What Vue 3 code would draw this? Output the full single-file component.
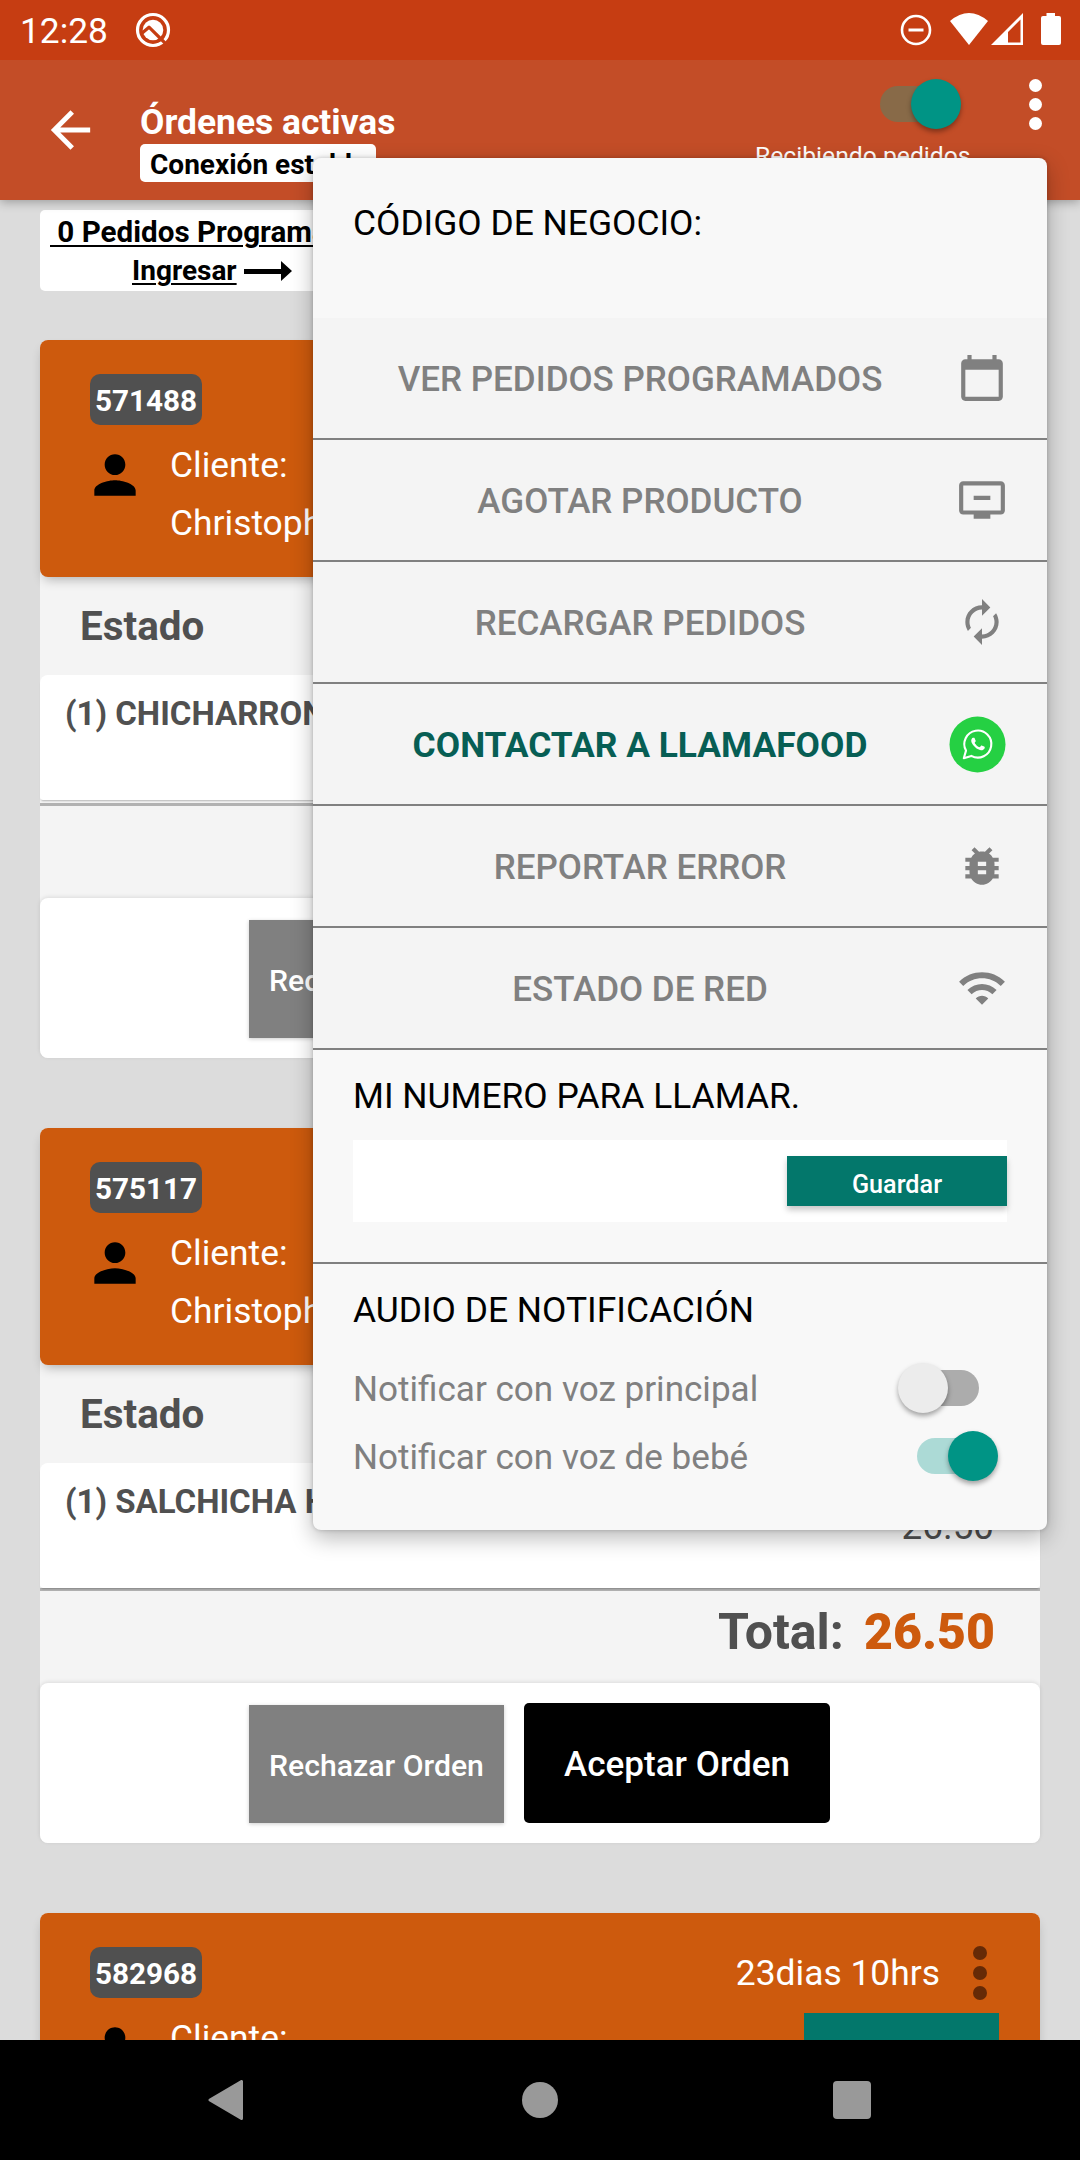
<template>
  <div class="screen">
    <div class="status-bar">
      <span class="clock">12:28</span>
      <svg class="status-app" width="38" height="38" viewBox="0 0 38 38">
        <circle cx="19" cy="19" r="15.5" fill="none" stroke="#fff" stroke-width="3.2" />
        <circle cx="19" cy="19" r="10.3" fill="#fff" />
        <path d="M7 23 L15 16.2 L31 32" fill="none" stroke="#c63d12" stroke-width="3.2" stroke-linejoin="round" />
      </svg>
      <div class="status-icons">
        <svg width="34" height="34" viewBox="0 0 34 34">
          <circle cx="17" cy="17" r="14" fill="none" stroke="#fff" stroke-width="2.6" />
          <path d="M9.5 17 H24.5" stroke="#fff" stroke-width="3" />
        </svg>
        <svg class="wifi" width="38" height="32" viewBox="0 0 38 32">
          <path d="M0 8 Q19 -8 38 8 L19 32 Z" fill="#fff" />
        </svg>
        <svg class="signal" width="32" height="32" viewBox="0 0 32 32">
          <path d="M0 32 L32 0 V32 Z M17 29.5 H29.5 V6.5 L17 19 Z" fill="#fff" fill-rule="evenodd" />
        </svg>
        <svg class="battery" width="20" height="32" viewBox="0 0 20 32">
          <path d="M5.5 0 H14 V3 H18 Q20 3 20 5 V30 Q20 32 18 32 H2 Q0 32 0 30 V5 Q0 3 2 3 H5.5 Z" fill="#fff" />
        </svg>
      </div>
    </div>

    <header class="app-bar">
      <svg class="back" width="59" height="60" viewBox="0 0 24 24">
        <path d="M20 11H7.83l5.59-5.59L12 4l-8 8 8 8 1.41-1.41L7.83 13H20v-2z" fill="#fff" />
      </svg>
      <div class="titles">
        <h1>Órdenes activas</h1>
        <span class="connection">Conexión estable</span>
      </div>
      <div class="receiving">
        <span class="switch on bar"><i></i></span>
        <span class="receiving-text">Recibiendo pedidos</span>
      </div>
      <div class="dots"><i></i><i></i><i></i></div>
    </header>

    <main class="content">
      <div class="scheduled">
        <div class="scheduled-title">&nbsp;0 Pedidos Programados</div>
        <div class="scheduled-link">
          <span>Ingresar</span>
          <svg width="48" height="20" viewBox="0 0 48 20">
            <path d="M0 8 H37 V0 L48 10 L37 20 V13 H0 Z" />
          </svg>
        </div>
      </div>

      <article v-for="order in orders" :key="order.id" class="order">
        <div class="order-head">
          <div class="order-top">
            <span class="order-id">{{ order.id }}</span>
            <template v-if="order.time">
              <span class="order-time">{{ order.time }}</span>
              <div class="dots dark"><i></i><i></i><i></i></div>
            </template>
          </div>
          <div class="client">
            <svg width="62" height="62" viewBox="0 0 24 24">
              <path d="M12 12c2.21 0 4-1.79 4-4s-1.79-4-4-4-4 1.79-4 4 1.79 4 4 4zm0 2c-2.67 0-8 1.34-8 4v2h16v-2c0-2.66-5.33-4-8-4z" />
            </svg>
            <div class="client-name">
              <div>Cliente:</div>
              <div>{{ order.client }}</div>
            </div>
            <div class="client-action"></div>
          </div>
        </div>
        <template v-if="order.item">
          <div class="order-state">Estado</div>
          <div class="order-items">
            <span class="item-name">{{ order.item }}</span>
            <span class="item-price">{{ order.total }}</span>
          </div>
          <div class="order-total" :class="{ spaced: order.spaced }">
            <template v-if="order.total">
              <span>Total:</span>
              <b>{{ order.total }}</b>
            </template>
          </div>
          <div class="order-actions">
            <button class="reject">Rechazar Orden</button>
            <button v-if="order.total" class="accept">Aceptar Orden</button>
            <div v-else class="accept"></div>
          </div>
        </template>
      </article>
    </main>

    <nav class="nav-bar">
      <svg width="36" height="40" viewBox="0 0 36 40">
        <path d="M33.5 1.5 V38.5 L2 20 Z" fill="#999" stroke="#999" stroke-width="3" stroke-linejoin="round" />
      </svg>
      <span class="nav-home"></span>
      <span class="nav-recent"></span>
    </nav>

    <section class="menu">
      <h2 class="code">CÓDIGO DE NEGOCIO:</h2>
      <button v-for="entry in entries" :key="entry.label" class="menu-row" :class="{ contact: entry.contact }">
        <span>{{ entry.label }}</span>
        <svg v-if="entry.contact" width="57" height="57" viewBox="0 0 57 57">
          <circle cx="28.5" cy="28.5" r="28" fill="#25d043" />
          <path d="M14.8 42.2 L17 34.6 A13.5 13.5 0 1 1 22.3 39.9 Z" fill="none" stroke="#fff" stroke-width="2.1" stroke-linejoin="round" />
          <path transform="translate(15.5 14.5) scale(1.12)" fill="#fff" d="M17.472 14.382c-.297-.149-1.758-.867-2.03-.967-.273-.099-.471-.148-.67.15-.197.297-.767.966-.94 1.164-.173.199-.347.223-.644.075-.297-.15-1.255-.463-2.39-1.475-.883-.788-1.48-1.761-1.653-2.059-.173-.297-.018-.458.13-.606.134-.133.298-.347.446-.52.149-.174.198-.298.298-.497.099-.198.05-.371-.025-.52-.075-.149-.669-1.612-.916-2.207-.242-.579-.487-.5-.669-.51-.173-.008-.371-.01-.57-.01-.198 0-.52.074-.792.372-.272.297-1.04 1.016-1.04 2.479 0 1.462 1.065 2.875 1.213 3.074.149.198 2.096 3.2 5.077 4.487.709.306 1.262.489 1.694.625.712.227 1.36.195 1.871.118.571-.085 1.758-.719 2.006-1.413.248-.694.248-1.289.173-1.413-.074-.124-.272-.198-.57-.347z" />
        </svg>
        <svg v-else width="50" height="50" viewBox="0 0 24 24">
          <path :d="entry.icon" fill="#808080" />
        </svg>
      </button>

      <div class="phone">
        <h2>MI NUMERO PARA LLAMAR.</h2>
        <div class="phone-field">
          <input v-model="phone" />
          <button>Guardar</button>
        </div>
      </div>

      <div class="audio">
        <h2>AUDIO DE NOTIFICACIÓN</h2>
        <div class="audio-row">
          <span>Notificar con voz principal</span>
          <span class="switch off"><i></i></span>
        </div>
        <div class="audio-row">
          <span>Notificar con voz de bebé</span>
          <span class="switch on"><i></i></span>
        </div>
      </div>
    </section>
  </div>
</template>

<script setup>
import { ref } from "vue";

const phone = ref("");

const orders = [
  { id: "571488", client: "Christopher", item: "(1) CHICHARRON", spaced: true },
  { id: "575117", client: "Christopher", item: "(1) SALCHICHA H", total: "26.50" },
  { id: "582968", time: "23dias 10hrs" },
];

const entries = [
  {
    label: "VER PEDIDOS PROGRAMADOS",
    icon: "M20 3h-1V1h-2v2H7V1H5v2H4c-1.1 0-2 .9-2 2v16c0 1.1.9 2 2 2h16c1.1 0 2-.9 2-2V5c0-1.1-.9-2-2-2zm0 18H4V8h16v13z",
  },
  {
    label: "AGOTAR PRODUCTO",
    icon: "M21 3H3c-1.11 0-2 .89-2 2v12c0 1.1.89 2 2 2h5v2h8v-2h5c1.1 0 1.99-.9 1.99-2L23 5c0-1.11-.9-2-2-2zm0 14H3V5h18v12zm-5-7v2H8v-2h8z",
  },
  {
    label: "RECARGAR PEDIDOS",
    icon: "M12 6v3l4-4-4-4v3c-4.42 0-8 3.58-8 8 0 1.57.46 3.03 1.24 4.26L6.7 14.8c-.45-.83-.7-1.79-.7-2.8 0-3.31 2.69-6 6-6zm6.76 1.74L17.3 9.2c.44.84.7 1.79.7 2.8 0 3.31-2.69 6-6 6v-3l-4 4 4 4v-3c4.42 0 8-3.58 8-8 0-1.57-.46-3.03-1.24-4.26z",
  },
  { label: "CONTACTAR A LLAMAFOOD", contact: true },
  {
    label: "REPORTAR ERROR",
    icon: "M20 8h-2.81c-.45-.78-1.07-1.45-1.82-1.96L17 4.41 15.59 3l-2.17 2.17C12.96 5.06 12.49 5 12 5c-.49 0-.96.06-1.41.17L8.41 3 7 4.41l1.62 1.63C7.88 6.55 7.26 7.22 6.81 8H4v2h2.09c-.05.33-.09.66-.09 1v1H4v2h2v1c0 .34.04.67.09 1H4v2h2.81c1.04 1.79 2.97 3 5.19 3s4.15-1.21 5.19-3H20v-2h-2.09c.05-.33.09-.66.09-1v-1h2v-2h-2v-1c0-.34-.04-.67-.09-1H20V8zm-6 8h-4v-2h4v2zm0-4h-4v-2h4v2z",
  },
  {
    label: "ESTADO DE RED",
    icon: "M1 9l2 2c4.97-4.97 13.03-4.97 18 0l2-2C16.93 2.93 7.08 2.93 1 9zm8 8l3 3 3-3c-1.65-1.66-4.34-1.66-6 0zm-4-4l2 2c2.76-2.76 7.24-2.76 10 0l2-2C15.14 9.14 8.87 9.14 5 13z",
  },
];
</script>

<style>
body {
  margin: 0;
}
</style>

<style scoped>
.screen {
  position: relative;
  width: 1080px;
  height: 2160px;
  display: flex;
  flex-direction: column;
  overflow: hidden;
  background: #dcdcdc;
  font-family: Roboto, "Liberation Sans", sans-serif;
  color: #000;
}

.screen * {
  box-sizing: border-box;
}

h1,
h2 {
  margin: 0;
}

button {
  border: none;
  padding: 0;
  font-family: inherit;
}

svg {
  display: block;
  flex: none;
}

/* status bar */
.status-bar {
  flex: none;
  height: 60px;
  background: #c63d12;
  color: #fff;
  display: flex;
  align-items: flex-start;
  padding: 0 19px 0 20px;
}

.clock {
  font-size: 35.3px;
  line-height: 63px;
  width: 114px;
}

.status-app {
  margin-top: 11px;
}

.status-icons {
  margin-left: auto;
  padding-top: 13px;
  display: flex;
}

.wifi {
  margin-left: 17px;
}

.signal {
  margin-left: 3px;
}

.battery {
  margin-left: 18px;
}

/* app bar */
.app-bar {
  position: relative;
  flex: none;
  height: 140px;
  background: #c34d27;
  color: #fff;
  display: flex;
  align-items: flex-start;
  padding-left: 41px;
  box-shadow: 0 2px 10px rgba(0, 0, 0, 0.3);
  clip-path: inset(0 0 -20px 0);
}

.back {
  margin-top: 40px;
}

.titles {
  margin: 41px 0 0 40px;
  display: flex;
  flex-direction: column;
  align-items: flex-start;
}

.titles h1 {
  font-size: 35.4px;
  line-height: 42px;
  font-weight: 700;
}

.connection {
  margin-top: 1px;
  width: 236px;
  height: 38px;
  padding-left: 10px;
  border-radius: 5px;
  background: #fff;
  color: #000;
  font-size: 28px;
  line-height: 42px;
  font-weight: 700;
  white-space: nowrap;
}

.receiving {
  margin: 19px 0 0 auto;
  width: 214px;
  display: flex;
  flex-direction: column;
}

.receiving-text {
  margin-top: 12px;
  font-size: 24.7px;
  line-height: 30px;
  white-space: nowrap;
}

.dots {
  width: 14px;
  display: flex;
  flex-direction: column;
  align-items: center;
  gap: 6px;
}

.dots i {
  width: 13px;
  height: 13px;
  border-radius: 50%;
  background: #fff;
}

.app-bar > .dots {
  margin: 19px 38px 0 59px;
}

/* switches */
.switch {
  position: relative;
  display: block;
  width: 72px;
  height: 50px;
}

.switch::before {
  content: "";
  position: absolute;
  left: 0;
  right: 0;
  top: 7px;
  height: 36px;
  border-radius: 18px;
  background: #acacac;
}

.switch i {
  position: absolute;
  top: 0;
  left: -9px;
  width: 50px;
  height: 50px;
  border-radius: 50%;
  background: #ececec;
  box-shadow: 0 3px 5px rgba(0, 0, 0, 0.35);
}

.switch.on::before {
  background: #acdad6;
}

.switch.on i {
  left: 31px;
  background: #009485;
}

.switch.bar {
  margin-left: 125px;
}

.switch.bar::before {
  background: #886a48;
}

/* orders */
.content {
  flex: 1;
  min-height: 0;
  overflow: hidden;
  padding: 10px 40px 0;
}

.scheduled {
  width: 330px;
  height: 81px;
  margin-bottom: 49px;
  padding: 1px 10px 0;
  border-radius: 5px;
  background: #fff;
  font-size: 28px;
  font-weight: 700;
}

.scheduled-title {
  font-size: 29.6px;
  line-height: 42px;
  white-space: nowrap;
  text-decoration: underline;
  text-decoration-thickness: 2px;
  text-underline-offset: 3px;
}

.scheduled-link {
  display: flex;
  align-items: center;
  gap: 7px;
  margin: -2px 0 0 82px;
  line-height: 40px;
}

.scheduled-link span {
  text-decoration: underline;
  text-decoration-thickness: 2px;
  text-underline-offset: 3px;
}

.order {
  width: 1000px;
  margin-bottom: 70px;
  background: #f4f4f4;
  border-radius: 8px;
}

.order-head {
  position: relative;
  height: 237px;
  padding: 34px 50px 0;
  border-radius: 8px;
  background: #cd5a0d;
  color: #fff;
  box-shadow: 0 6px 12px -4px rgba(0, 0, 0, 0.3);
}

.order-top {
  display: flex;
  align-items: center;
  height: 51px;
}

.order-id {
  width: 112px;
  border-radius: 10px;
  background: #505050;
  font-size: 29.7px;
  line-height: 54px;
  height: 51px;
  font-weight: 700;
  text-align: center;
}

.order-time {
  margin-left: auto;
  font-size: 35.4px;
  line-height: 51px;
  padding-top: 2px;
}

.dots.dark {
  margin: 0 3px 0 33px;
}

.dots.dark i {
  width: 14px;
  height: 14px;
  background: #662a06;
}

.client {
  display: flex;
  align-items: flex-start;
}

.client svg {
  margin: 19px 0 0 -6px;
}

.client-name {
  margin: 11px 0 0 24px;
  font-size: 35.4px;
  line-height: 58px;
}

.client-action {
  margin: 15px -9px 0 auto;
  width: 195px;
  height: 60px;
  background: #03776b;
}

.order-state {
  height: 98px;
  padding-left: 40px;
  border-radius: 8px;
  font-size: 40.4px;
  line-height: 100px;
  font-weight: 700;
  color: #505050;
}

.order-items {
  position: relative;
  height: 125px;
  padding: 17px 46px 0 25px;
  display: flex;
  justify-content: space-between;
  align-items: flex-start;
  border-radius: 8px 8px 3px 3px;
  background: #fff;
  color: #505050;
  box-shadow: 0 2px 2px -1px rgba(0, 0, 0, 0.25);
}

.item-name {
  font-size: 33px;
  line-height: 44px;
  font-weight: 700;
}

.item-price {
  margin-top: 25px;
  font-size: 36.8px;
  line-height: 44px;
}

.order-total {
  height: 95px;
  padding-right: 45px;
  border-top: 3px solid #b2b2b2;
  display: flex;
  justify-content: flex-end;
  gap: 20px;
  font-size: 50px;
  line-height: 82px;
  font-weight: 700;
  color: #505050;
}

.order-total b {
  color: #cd5a0d;
}

.order-total.spaced {
  margin-top: 3px;
}

.order-actions {
  position: relative;
  height: 160px;
  display: flex;
  align-items: flex-end;
  justify-content: center;
  gap: 20px;
  padding: 0 1px 20px 0;
  border-radius: 8px;
  background: #fff;
  box-shadow: 0 -1px 4px rgba(0, 0, 0, 0.1);
}

.order-actions button {
  padding-top: 2px;
  color: #fff;
  font-weight: 500;
}

.reject {
  width: 255px;
  height: 118px;
  background: #808080;
  font-size: 30.2px;
  box-shadow: 0 1px 4px rgba(0, 0, 0, 0.2);
}

.accept {
  width: 306px;
  height: 120px;
  border-radius: 5px;
  background: #000;
  font-size: 35.1px;
}

/* navigation */
.nav-bar {
  position: relative;
  flex: none;
  height: 120px;
  padding: 0 209px 0 208px;
  display: flex;
  align-items: center;
  justify-content: space-between;
  background: #000;
}

.nav-home {
  width: 36px;
  height: 36px;
  margin-left: 2px;
  border-radius: 50%;
  background: #999;
}

.nav-recent {
  width: 38px;
  height: 38px;
  border-radius: 4px;
  background: #999;
}

/* popup menu lying over the page */
.menu {
  position: absolute;
  left: 313px;
  top: 158px;
  width: 734px;
  height: 1372px;
  border-radius: 8px;
  background: #f8f8f8;
  box-shadow: 0 8px 22px rgba(0, 0, 0, 0.28), 0 0 4px rgba(0, 0, 0, 0.2);
}

.menu h2 {
  font-size: 35.4px;
  font-weight: 400;
}

.code {
  height: 160px;
  padding: 44px 40px 0;
  line-height: 42px;
}

.menu-row {
  width: 100%;
  height: 122px;
  padding: 0 40px 0 73px;
  display: flex;
  align-items: center;
  border-bottom: 2px solid #808080;
  background: #f4f4f4;
  color: #808080;
  font-size: 35px;
  font-weight: 500;
}

.menu-row span {
  width: 508px;
  padding-top: 2px;
  text-align: center;
  white-space: nowrap;
}

.menu-row svg {
  margin-left: auto;
}

.menu-row.contact {
  padding-right: 41px;
  color: #075e54;
  font-size: 35.4px;
  font-weight: 700;
}

.phone {
  height: 214px;
  padding: 25px 40px 0;
  border-bottom: 2px solid #808080;
}

.phone h2,
.audio h2 {
  line-height: 42px;
}

.phone-field {
  margin-top: 23px;
  height: 82px;
  display: flex;
  align-items: center;
  background: #fff;
}

.phone-field input {
  flex: 1;
  min-width: 0;
  height: 60px;
  border: none;
  outline: none;
  background: transparent;
  font-size: 30px;
}

.phone-field button {
  width: 220px;
  height: 50px;
  padding-top: 7px;
  background: #03776b;
  color: #fff;
  font-size: 25.2px;
  font-weight: 500;
  box-shadow: 0 4px 6px rgba(0, 0, 0, 0.22);
}

.audio {
  padding: 25px 40px 0;
}

.audio h2 {
  margin-bottom: 23px;
}

.audio-row {
  height: 68px;
  display: flex;
  align-items: center;
  justify-content: space-between;
  color: #808080;
  font-size: 35.1px;
}

.audio-row span:first-child {
  padding-top: 1px;
}

.audio-row .switch {
  margin-right: 18px;
}

.audio-row .switch.off {
  margin-right: 28px;
}
</style>
